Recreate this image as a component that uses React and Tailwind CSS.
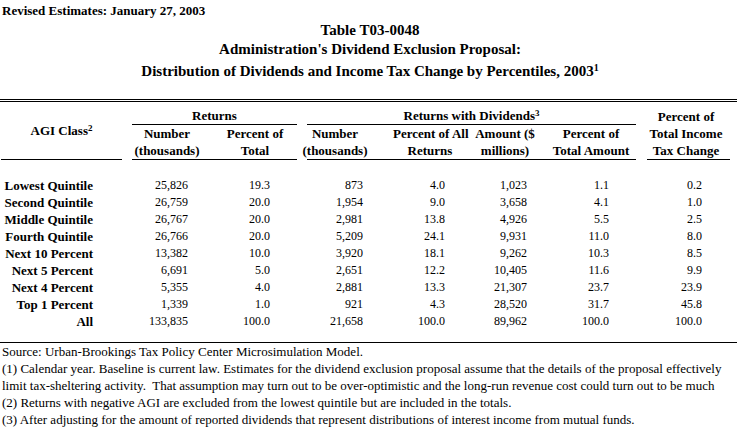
import React from "react";

const rows = [
  ["Lowest Quintile", "25,826", "19.3", "873", "4.0", "1,023", "1.1", "0.2"],
  ["Second Quintile", "26,759", "20.0", "1,954", "9.0", "3,658", "4.1", "1.0"],
  ["Middle Quintile", "26,767", "20.0", "2,981", "13.8", "4,926", "5.5", "2.5"],
  ["Fourth Quintile", "26,766", "20.0", "5,209", "24.1", "9,931", "11.0", "8.0"],
  ["Next 10 Percent", "13,382", "10.0", "3,920", "18.1", "9,262", "10.3", "8.5"],
  ["Next 5 Percent", "6,691", "5.0", "2,651", "12.2", "10,405", "11.6", "9.9"],
  ["Next 4 Percent", "5,355", "4.0", "2,881", "13.3", "21,307", "23.7", "23.9"],
  ["Top 1 Percent", "1,339", "1.0", "921", "4.3", "28,520", "31.7", "45.8"],
  ["All", "133,835", "100.0", "21,658", "100.0", "89,962", "100.0", "100.0"],
];

// right padding per data column so the figures line up with the reference
const padRight = [
  "pr-[29px]",
  "pr-[24px]",
  "pr-[28px]",
  "pr-[9px]",
  "pr-[22px]",
  "pr-[21px]",
  "pr-[29px]",
  "pr-[35px]",
];

const notes = [
  "Source: Urban-Brookings Tax Policy Center Microsimulation Model.",
  "(1) Calendar year. Baseline is current law. Estimates for the dividend exclusion proposal assume that the details of the proposal effectively",
  "limit tax-sheltering activity.  That assumption may turn out to be over-optimistic and the long-run revenue cost could turn out to be much",
  "(2) Returns with negative AGI are excluded from the lowest quintile but are included in the totals.",
  "(3) After adjusting for the amount of reported dividends that represent distributions of interest income from mutual funds.",
];

const cols = "grid grid-cols-[122px_90px_86px_74px_95px_81px_90px_99px]";

const App = () => {
  return (
    <div className="w-[740px] h-[432px] overflow-hidden bg-white text-black font-['Liberation_Serif',serif]">
      {/* Date line */}
      <div className="h-[20px] pt-[1px] pl-[2px] text-[13px] leading-[20px] font-bold">
        Revised Estimates: January 27, 2003
      </div>

      {/* Titles */}
      <div className="text-center font-bold text-[15px]">
        <div className="h-[20px] leading-[20px]">Table T03-0048</div>
        <div className="h-[19px] leading-[19px]">Administration's Dividend Exclusion Proposal:</div>
        <div className="h-[24px] leading-[24px]">
          Distribution of Dividends and Income Tax Change by Percentiles, 2003
          <sup className="text-[10px]">1</sup>
        </div>
      </div>

      {/* Double rule */}
      <div className="mt-[16px] w-[737px] h-[3px] border-y border-black" />

      {/* Column headings */}
      <div className={`${cols} w-[737px] text-[13px] font-bold leading-[17px] whitespace-nowrap`}>
        <div className="row-span-3 ml-[1px] border-b border-black flex items-center justify-center">
          <span>
            AGI Class<sup className="text-[9px]">2</sup>
          </span>
        </div>
        <div className="col-span-2 ml-[10px] mr-[1px] pt-[5px] border-b border-black text-center">
          Returns
        </div>
        <div className="col-span-4 ml-[9px] mr-[2px] pt-[5px] border-b border-black text-center">
          Returns with Dividends<sup className="text-[9px]">3</sup>
        </div>
        <div className="row-span-3 ml-[9px] mr-[7px] pr-[5px] border-b border-black flex flex-col justify-end items-center">
          <div>Percent of</div>
          <div>Total Income</div>
          <div>Tax Change</div>
        </div>

        <div className="text-center">
          <div>Number</div>
          <div>(thousands)</div>
        </div>
        <div className="text-center">
          <div>Percent of</div>
          <div>Total</div>
        </div>
        <div className="text-center">
          <div>Number</div>
          <div>(thousands)</div>
        </div>
        <div className="text-center pl-[21px]">
          <div>Percent of All</div>
          <div>Returns</div>
        </div>
        <div className="text-center pr-[5px]">
          <div>Amount ($</div>
          <div>millions)</div>
        </div>
        <div className="text-center pr-[4px]">
          <div>Percent of</div>
          <div>Total Amount</div>
        </div>

        <div className="col-span-2 ml-[10px] mr-[1px] h-px bg-black" />
        <div className="col-span-4 ml-[9px] mr-[2px] h-px bg-black" />
      </div>

      {/* Data */}
      <div className="pt-[17px] w-[737px]">
        {rows.map((row) => (
          <div key={row[0]} className={`${cols} leading-[17px] whitespace-nowrap`}>
            {row.map((cell, i) => (
              <div
                key={i}
                className={`text-right ${padRight[i]} ${
                  i === 0 ? "text-[13px] font-bold" : "text-[12px]"
                }`}
              >
                {cell}
              </div>
            ))}
          </div>
        ))}
      </div>

      {/* Footnotes */}
      <div className="mt-[12px] w-[737px] border-t border-black" />
      <div className="pl-[2px] text-[13px] leading-[17px]">
        {notes.map((note) => (
          <div key={note} className="whitespace-pre">
            {note}
          </div>
        ))}
      </div>
    </div>
  );
};

export default App;
